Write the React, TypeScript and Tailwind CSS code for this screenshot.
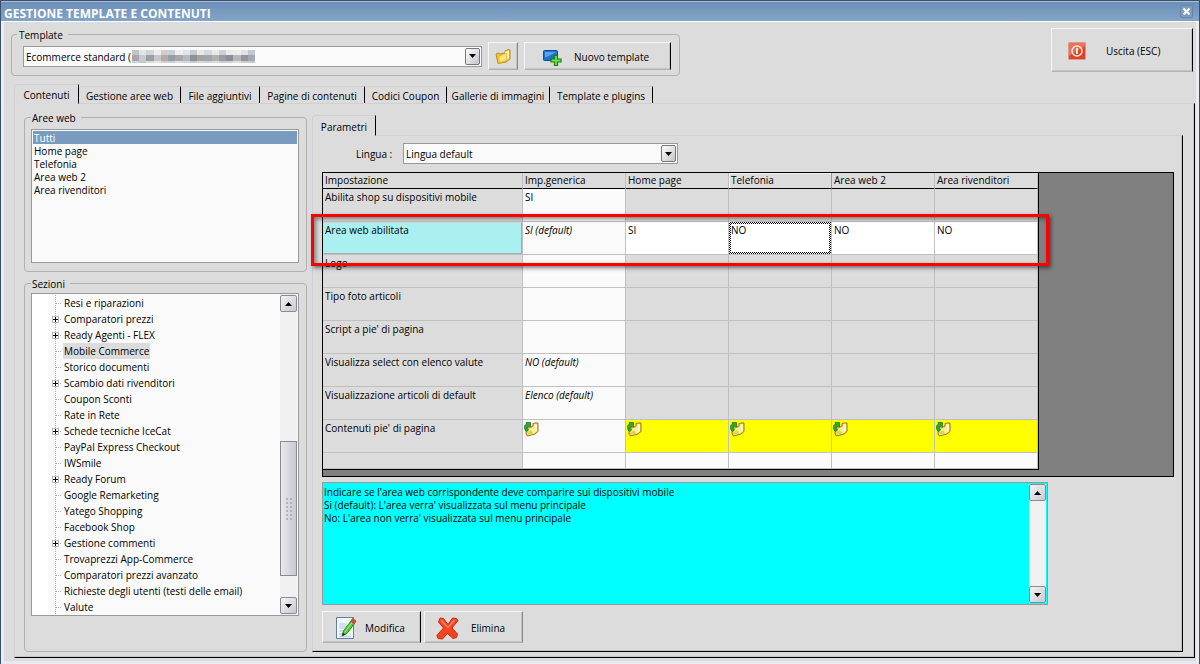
import { useState, type ReactNode } from "react"

const tabs = [
  { name: "Gestione aree web", width: "w-[102px]" },
  { name: "File aggiuntivi", width: "w-[79px]" },
  { name: "Pagine di contenuti", width: "w-[105px]" },
  { name: "Codici Coupon", width: "w-[82px]" },
  { name: "Gallerie di immagini", width: "w-[103px]" },
  { name: "Template e plugins", width: "w-[103px]" },
]

const areas = ["Tutti", "Home page", "Telefonia", "Area web 2", "Area rivenditori"]

const sections = [
  { name: "Resi e riparazioni" },
  { name: "Comparatori prezzi", children: true },
  { name: "Ready Agenti - FLEX", children: true },
  { name: "Mobile Commerce" },
  { name: "Storico documenti" },
  { name: "Scambio dati rivenditori", children: true },
  { name: "Coupon Sconti" },
  { name: "Rate in Rete" },
  { name: "Schede tecniche IceCat", children: true },
  { name: "PayPal Express Checkout" },
  { name: "IWSmile" },
  { name: "Ready Forum", children: true },
  { name: "Google Remarketing" },
  { name: "Yatego Shopping" },
  { name: "Facebook Shop" },
  { name: "Gestione commenti", children: true },
  { name: "Trovaprezzi App-Commerce" },
  { name: "Comparatori prezzi avanzato" },
  { name: "Richieste degli utenti (testi delle email)" },
  { name: "Valute" },
]

const columns = ["Imp.generica", "Home page", "Telefonia", "Area web 2", "Area rivenditori"]

const settings = [
  { name: "Abilita shop su dispositivi mobile", value: "SI" },
  { name: "Area web abilitata", value: "SI (default)", areas: ["SI", "NO", "NO", "NO"] },
  { name: "Logo" },
  { name: "Tipo foto articoli" },
  { name: "Script a pie' di pagina" },
  { name: "Visualizza select con elenco valute", value: "NO (default)" },
  { name: "Visualizzazione articoli di default", value: "Elenco (default)" },
  { name: "Contenuti pie' di pagina", folder: true },
]

const help = `Indicare se l'area web corrispondente deve comparire sui dispositivi mobile
Si (default): L'area verra' visualizzata sul menu principale
No: L'area non verra' visualizzata sul menu principale`

// colours of the obscured address, three rows of blocks
const mosaic = [
  "#c2c4c8", "#dfe5e6", "#d4d4d6", "#ececec", "#d6cdc8", "#c9ced8", "#eeeeee", "#dde6ea", "#c6c8d2", "#ebe8e4", "#d5dade", "#e6e9ea", "#cdd0d8", "#e9e9e9", "#eeeeee", "#e2e2e4", "#c4c8ce",
  "#a8a6a8", "#c9c9cb", "#98a0a8", "#c6c6ca", "#b4aca8", "#989ca6", "#a8a8ac", "#b4babe", "#8e9098", "#a6a29e", "#a0a6ae", "#b2b0b2", "#9a9ca4", "#8c8e9a", "#b6b6ba", "#98949c", "#a4a8b2",
  "#d2d2d4", "#c6cacc", "#dcdcde", "#e6e6e6", "#d4d0cc", "#ccd0d4", "#dedee0", "#d2d8da", "#c8cace", "#d8d6d2", "#d0d4d8", "#dcdcdc", "#ccced2", "#d2d2d6", "#dedede", "#ccccd0", "#c6cad0",
]

const raised =
  "border border-t-[#f6f6f6] border-l-[#f6f6f6] border-b-[#b4b4b4] shadow-[inset_-1px_-1px_0_#c4c4c4] pt-[2px]"

function Arrow({ up = false }) {
  return (
    <svg width="7" height="4" viewBox="0 0 7 4" className={up ? "rotate-180" : ""} aria-hidden="true">
      <path d="M0 0h7L3.500 4z" fill="#000" />
    </svg>
  )
}

function ScrollButton({ label, up = false }: { label: string; up?: boolean }) {
  return (
    <button
      aria-label={label}
      className="flex h-[17px] w-[17px] shrink-0 items-center justify-center rounded-xs border border-[#8a8a92] bg-linear-to-br from-[#f4f4f6] to-[#c9c9cf]"
    >
      <Arrow up={up} />
    </button>
  )
}

function Combo({ label, width, children, overlay }: { label: string; width: string; children: ReactNode; overlay?: ReactNode }) {
  return (
    <div className={`relative h-[21px] ${width}`}>
      <select
        id={label}
        aria-label={label}
        className="block h-full w-full appearance-none rounded-none border border-[#999] bg-[#fafafa] pt-[2px] pl-[2px] text-[10px] leading-[13px] outline-none"
      >
        {children}
      </select>
      {overlay}
      <span className="pointer-events-none absolute top-[2px] right-[2px] flex h-[17px] w-[15px] items-center justify-center rounded-xs border border-[#777] bg-linear-to-br from-white to-[#c4c4ca]">
        <Arrow />
      </span>
    </div>
  )
}

function FolderIcon() {
  return (
    <svg width="16" height="16" viewBox="0 0 16 16" aria-hidden="true">
      <path d="M1 5l3-1 1 1 5-1V2l3-1.500L15 1v9l-4 3-8 1.500z" fill="#f3c33c" stroke="#c08a1c" strokeWidth="1" strokeLinejoin="round" />
      <path d="M10 3l4-1.500V9l-3 2z" fill="#fff6c9" />
      <path d="M4 7l3-.5 1-1.200 4-.8-1 7.500-7 1.500z" fill="#ffe873" stroke="#e3b22e" strokeWidth=".8" />
    </svg>
  )
}

function FolderLinkIcon() {
  return (
    <svg width="15" height="15" viewBox="0 0 15 15" aria-hidden="true">
      <path d="M2 5h5l2-1V1.500L11 1h3v8.500L11 12l-7.500 2L2 12z" fill="#f0cf62" stroke="#a8741c" strokeLinejoin="round" />
      <path d="M10 2.500l3-.5v7L11 10.500z" fill="#fff8dc" />
      <path d="M4.500 7l2.500-.5 1-1 3-.5v6l-6.500 2z" fill="#fff08c" />
      <path d="M4.500 12.500V10L7 8l2 3.500z" fill="#b8e05a" />
      <path d="M2.500 9.500C-.5 7 0 3 2.500 2L2 .5h4.500V5L5 3.800C3.500 4.500 3.200 6.500 4.500 8z" fill="#2fa82f" stroke="#11701a" strokeWidth=".7" />
    </svg>
  )
}

function NewTemplateIcon() {
  return (
    <svg width="19" height="17" viewBox="0 0 19 17" aria-hidden="true">
      <rect x=".5" y="1.500" width="14" height="10" rx="1" fill="#1f6fd0" stroke="#15499b" />
      <path d="M2 3h11L4 8H2z" fill="#5ba3ec" />
      <path d="M11.500 6.500h3v3.500H18v3h-3.500v3.500h-3V13H8v-3h3.500z" fill="#6fe04a" stroke="#12801a" strokeWidth="1.200" />
    </svg>
  )
}

function PowerIcon() {
  return (
    <svg width="18" height="18" viewBox="0 0 18 18" aria-hidden="true">
      <rect x=".5" y=".5" width="17" height="17" rx="1" fill="#dd4423" stroke="#d89a8c" />
      <path d="M1 1h16v3L1 14z" fill="#ea7256" />
      <circle cx="9" cy="9" r="5" fill="none" stroke="#fbe6e0" strokeWidth="1.500" />
      <path d="M9 6v6" stroke="#fbe6e0" strokeWidth="2" />
    </svg>
  )
}

function EditIcon() {
  return (
    <svg width="22" height="24" viewBox="0 0 22 24" aria-hidden="true">
      <path d="M1.500 1.500h17v21h-17z" fill="#f6f9fd" stroke="#5f7fa8" />
      <path d="M4 7h8v6H4z" fill="#d3deed" />
      <path d="M4 15h5M4 18h4M4 20.500h12" stroke="#c3d2e6" strokeWidth="1.500" />
      <path d="M7 20l1.500-5L16 5l3.500 2.500L12 17.500z" fill="#54c83a" stroke="#2a8a20" />
      <path d="M9.500 16.500L17 6.500" stroke="#a6ee8c" />
      <path d="M7 20l1-3.500 2.500 2z" fill="#333" />
      <path d="M16 5l1.500-2.500 3.500 2.500-1.500 2.500z" fill="#e8483a" stroke="#c83a2c" strokeLinejoin="round" />
    </svg>
  )
}

function DeleteIcon() {
  return (
    <svg width="23" height="23" viewBox="0 0 23 23" aria-hidden="true">
      <path
        d="M4 1l3.500.5L12 7.500 16.500 1l4 .5L22 3.500l-6 7.500 5.500 6-1 3.500-3.500 1-5.500-5-5 5.500-4.500-.5L.8 18.500 7.500 11 2.500 5z"
        fill="#f4431f"
        stroke="#c22c12"
        strokeLinejoin="round"
      />
      <path d="M5 3l7 7.500L18.500 3" fill="none" stroke="#ff8468" strokeWidth="1.500" />
    </svg>
  )
}

function TreeNode({ children = false }) {
  return (
    <svg width="15" height="16" viewBox="0 0 15 16" shapeRendering="crispEdges" className="shrink-0" aria-hidden="true">
      <path d="M7.500 0v16M8 8.500h6" stroke="#b0b0b0" strokeDasharray="1 1" />
      {children && (
        <>
          <rect x="4.500" y="5.500" width="6" height="6" fill="#fff" stroke="#b8b8b8" />
          <path d="M5 8.500h5M7.500 6v5" stroke="#000" />
        </>
      )}
    </svg>
  )
}

function SettingsTable() {
  const border = "border-r border-b border-[#c0c0c0] align-top font-normal"
  const cell = `${border} px-[2px] pt-[2px]`

  return (
    <table className="w-[716px] table-fixed border-separate border-spacing-0 border-r border-b border-black text-left">
      <thead>
        <tr className="h-4">
          <th className="w-[200px] border-r border-b border-r-[#c0c0c0] border-b-black px-[2px] py-0 font-normal">Impostazione</th>
          {columns.map((column) => (
            <th
              key={column}
              className={`border-r border-b border-b-black px-[2px] py-0 font-normal ${
                column === "Telefonia" ? "border-r-[#999] shadow-[inset_1px_1px_0_#f4f4f4]" : "border-r-[#c0c0c0]"
              }`}
            >
              {column}
            </th>
          ))}
        </tr>
      </thead>
      <tbody>
        {settings.map((row) => (
          <tr key={row.name} className="h-[33px]">
            <th className={`${cell} ${row.areas ? "bg-[#aaf0f0] shadow-[inset_1px_1px_0_#d8d8d8,inset_-1px_-1px_0_#aaa]" : "bg-[#dcdcdc]"}`}>
              {row.name}
            </th>
            <td className={`${cell} bg-[#fafafa] ${row.value?.includes("default") ? "italic" : ""}`}>
              {row.folder ? (
                <button aria-label="Apri contenuti" className="-ml-px block">
                  <FolderLinkIcon />
                </button>
              ) : (
                row.value
              )}
            </td>
            {columns.slice(1).map((column, i) =>
              row.areas && column === "Telefonia" ? (
                // focused cell, checkered frame
                <td key={column} className={`${border} p-0`}>
                  <div className="h-8 bg-[repeating-conic-gradient(#000_0_25%,#fff_0_50%)] bg-[length:2px_2px] p-[2px]">
                    <div className="h-full bg-white">{row.areas[i]}</div>
                  </div>
                </td>
              ) : (
                <td key={column} className={`${cell} ${row.folder ? "bg-[#ffff00]" : row.areas ? "bg-white" : "bg-[#dcdcdc]"}`}>
                  {row.folder ? (
                    <button aria-label={`Apri contenuti ${column}`} className="-ml-px block">
                      <FolderLinkIcon />
                    </button>
                  ) : (
                    row.areas?.[i]
                  )}
                </td>
              )
            )}
          </tr>
        ))}
        <tr className="h-4">
          <th className={`${cell} bg-[#dcdcdc]`} />
          {columns.map((column) => (
            <td key={column} className={`${cell} bg-[#fafafa]`} />
          ))}
        </tr>
      </tbody>
    </table>
  )
}

export default function App() {
  const [area, setArea] = useState("Tutti")
  const [section, setSection] = useState("Mobile Commerce")

  return (
    <div className="flex min-h-screen flex-col border border-[#3b4f66] bg-[#dcdcdc] font-['Open_Sans','Noto_Sans',sans-serif] text-[10px] leading-[13px] text-black">
      <header className="flex h-5 items-center justify-between border-t border-[#a9c0da] bg-linear-to-b from-[#6b8fb8] to-[#84a5c8] pr-[6px] pl-[3px]">
        <h1 className="pt-[3px] text-[12px] font-bold text-white">GESTIONE TEMPLATE E CONTENUTI</h1>
        <button aria-label="Chiudi" className="flex h-[13px] w-[13px] items-center justify-center rounded-xs border border-[#6484a8] bg-[#7c9cc0]">
          <svg width="7" height="7" viewBox="0 0 7 7" aria-hidden="true">
            <path d="M.5.500l6 6M6.500.500l-6 6" stroke="#fff" strokeWidth="2" />
          </svg>
        </button>
      </header>

      <main className="flex flex-1 flex-col border-x-3 border-t border-b-3 border-x-[#ececf0] border-t-white border-b-[#e6eaf0] pb-[3px]">
        <div className="flex items-start justify-between pt-[6px] pr-[3px] pl-[7px]">
          <fieldset className="rounded border border-[#b0b0b0] pr-2 pb-[5px] pl-[11px]">
            <legend className="-ml-[6px] pt-px pr-[5px] pl-[2px] leading-3">Template</legend>
            <div className="flex items-center pt-px">
              <Combo
                label="Template"
                width="w-[459px]"
                overlay={
                  <span className="absolute top-1 left-[109px] grid h-[13px] w-[123px] grid-cols-17 grid-rows-[5px_6px_2px]">
                    {mosaic.map((color, i) => (
                      <i key={i} style={{ backgroundColor: color }} />
                    ))}
                  </span>
                }
              >
                <option>Ecommerce standard (</option>
              </Combo>
              <button aria-label="Apri cartella" className={`ml-[6px] flex h-7 w-[30px] items-center justify-center border-r-[#888] ${raised}`}>
                <FolderIcon />
              </button>
              <button className={`ml-[6px] flex h-7 w-[147px] items-center gap-3 border-r-black pl-[18px] ${raised}`}>
                <NewTemplateIcon />
                Nuovo template
              </button>
            </div>
          </fieldset>
          <button className={`flex h-[44px] w-[142px] items-center gap-5 border-r-black pl-4 ${raised}`}>
            <PowerIcon />
            Uscita (ESC)
          </button>
        </div>

        <div role="tablist" className="mt-2 ml-[10px] flex items-end">
          <button role="tab" aria-selected="true" className="relative -mb-px h-5 w-[65px] rounded-tl border border-t-[#d0d0d4] border-r-black border-b-transparent border-l-[#d0d0d4] bg-[#dcdcdc] pt-[2px]">
            Contenuti
          </button>
          {tabs.map((tab) => (
            <button
              key={tab.name}
              role="tab"
              aria-selected="false"
              className={`h-[17px] rounded-tl border-t border-r border-t-[#d0d0d4] border-r-black pt-[2px] whitespace-nowrap ${tab.width}`}
            >
              {tab.name}
            </button>
          ))}
        </div>

        <div className="mr-px ml-[10px] flex flex-1 gap-[5px] border border-t-[#d0d0d0] border-r-black border-b-black border-l-[#d0d0d8] pr-[11px] pb-[5px] pl-[9px] shadow-[inset_-1px_-1px_0_#c4c4c4]">
          <div className="flex w-[283px] shrink-0 flex-col gap-[5px] pt-[7px]">
            <fieldset className="rounded border border-[#b0b0b0] pt-[5px] pr-[7px] pb-2 pl-[6px]">
              <legend className="pt-px pr-[5px] pl-px leading-3">Aree web</legend>
              <ul role="listbox" aria-label="Aree web" className="h-[134px] border border-[#999] bg-[#fafafa] p-px">
                {areas.map((name) => (
                  <li
                    key={name}
                    role="option"
                    aria-selected={name === area}
                    onClick={() => setArea(name)}
                    className={`pt-px pl-px leading-3 ${name === area ? "bg-[#7a9bc0] text-white" : ""}`}
                  >
                    {name}
                  </li>
                ))}
              </ul>
            </fieldset>

            <fieldset className="flex-1 rounded border border-[#b0b0b0] pt-[3px] pr-[7px] pb-2 pl-[6px]">
              <legend className="pt-px pr-[5px] pl-px leading-3">Sezioni</legend>
              <div className="flex h-[323px] border border-[#999] bg-[#fafafa]">
                <ul role="tree" aria-label="Sezioni" className="flex-1 pt-px">
                  {sections.map(({ name, children }) => (
                    <li key={name} role="treeitem" aria-selected={name === section} className="flex h-4">
                      <span className="w-4 shrink-0 bg-white" />
                      <TreeNode children={children} />
                      <button
                        onClick={() => setSection(name)}
                        className={`px-px whitespace-nowrap ${name === section ? "bg-[#dcdcdc]" : ""}`}
                      >
                        {name}
                      </button>
                    </li>
                  ))}
                </ul>
                <div className="mr-px flex w-[17px] flex-col bg-[#f0f0f0] py-px">
                  <ScrollButton label="Scorri su" up />
                  <div className="flex-1" />
                  <div className="flex h-[135px] items-center justify-center border border-[#8a8a92] bg-linear-to-r from-[#e8e8ec] to-[#c9c9d1]">
                    <svg width="6" height="22" viewBox="0 0 6 22" aria-hidden="true">
                      <path d="M1 0v22M5 0v22" stroke="#b4b4bc" strokeWidth="2" strokeDasharray="2 2" />
                    </svg>
                  </div>
                  <div className="h-[21px]" />
                  <ScrollButton label="Scorri giù" />
                </div>
              </div>
            </fieldset>
          </div>

          <div className="flex min-w-0 flex-1 flex-col pt-[11px]">
            <button role="tab" aria-selected="true" className="relative -mb-px h-[21px] w-16 rounded-tl border border-t-[#d0d0d4] border-r-black border-b-transparent border-l-[#d0d0d4] bg-[#dcdcdc] pt-[3px]">
              Parametri
            </button>
            <div className="flex flex-1 flex-col border border-t-[#d0d0d0] border-r-black border-b-black border-l-[#d0d0d8] pt-[7px] pr-2 pb-2 pl-[9px] shadow-[inset_-1px_-1px_0_#c4c4c4]">
              <div className="flex items-center">
                <label htmlFor="Lingua" className="w-[81px] pt-[2px] pl-[34px]">
                  Lingua :
                </label>
                <Combo label="Lingua" width="w-[275px]">
                  <option>Lingua default</option>
                </Combo>
              </div>

              <div className="relative mt-2 border border-black bg-[#808080] pb-[6px]">
                <div className="w-[716px] bg-[#dcdcdc]">
                  <SettingsTable />
                </div>
                <div className="pointer-events-none absolute top-[41px] -left-3 h-[52px] w-[738px] border-3 border-[#ff0000] shadow-[2px_2px_4px_rgba(0,0,0,0.5),inset_2px_2px_4px_rgba(0,0,0,0.45)]" />
              </div>

              <div className="mt-[5px] flex h-[123px] w-[726px] border border-[#999] bg-[#00ffff]">
                <textarea
                  readOnly
                  aria-label="Descrizione"
                  defaultValue={help}
                  className="block flex-1 resize-none overflow-hidden bg-transparent px-px pt-[3px] outline-none"
                />
                <div className="my-px mr-px flex w-[17px] flex-col justify-between bg-[#f0f0f0]">
                  <ScrollButton label="Scorri testo su" up />
                  <ScrollButton label="Scorri testo giù" />
                </div>
              </div>

              <div className="mt-[6px] flex gap-[3px]">
                <button className={`flex h-8 w-[99px] items-center gap-2 border-r-black pl-3 ${raised}`}>
                  <EditIcon />
                  Modifica
                </button>
                <button className={`flex h-8 w-[99px] items-center gap-3 border-r-[#888] pl-[11px] ${raised}`}>
                  <DeleteIcon />
                  Elimina
                </button>
              </div>
            </div>
          </div>
        </div>
      </main>
    </div>
  )
}
